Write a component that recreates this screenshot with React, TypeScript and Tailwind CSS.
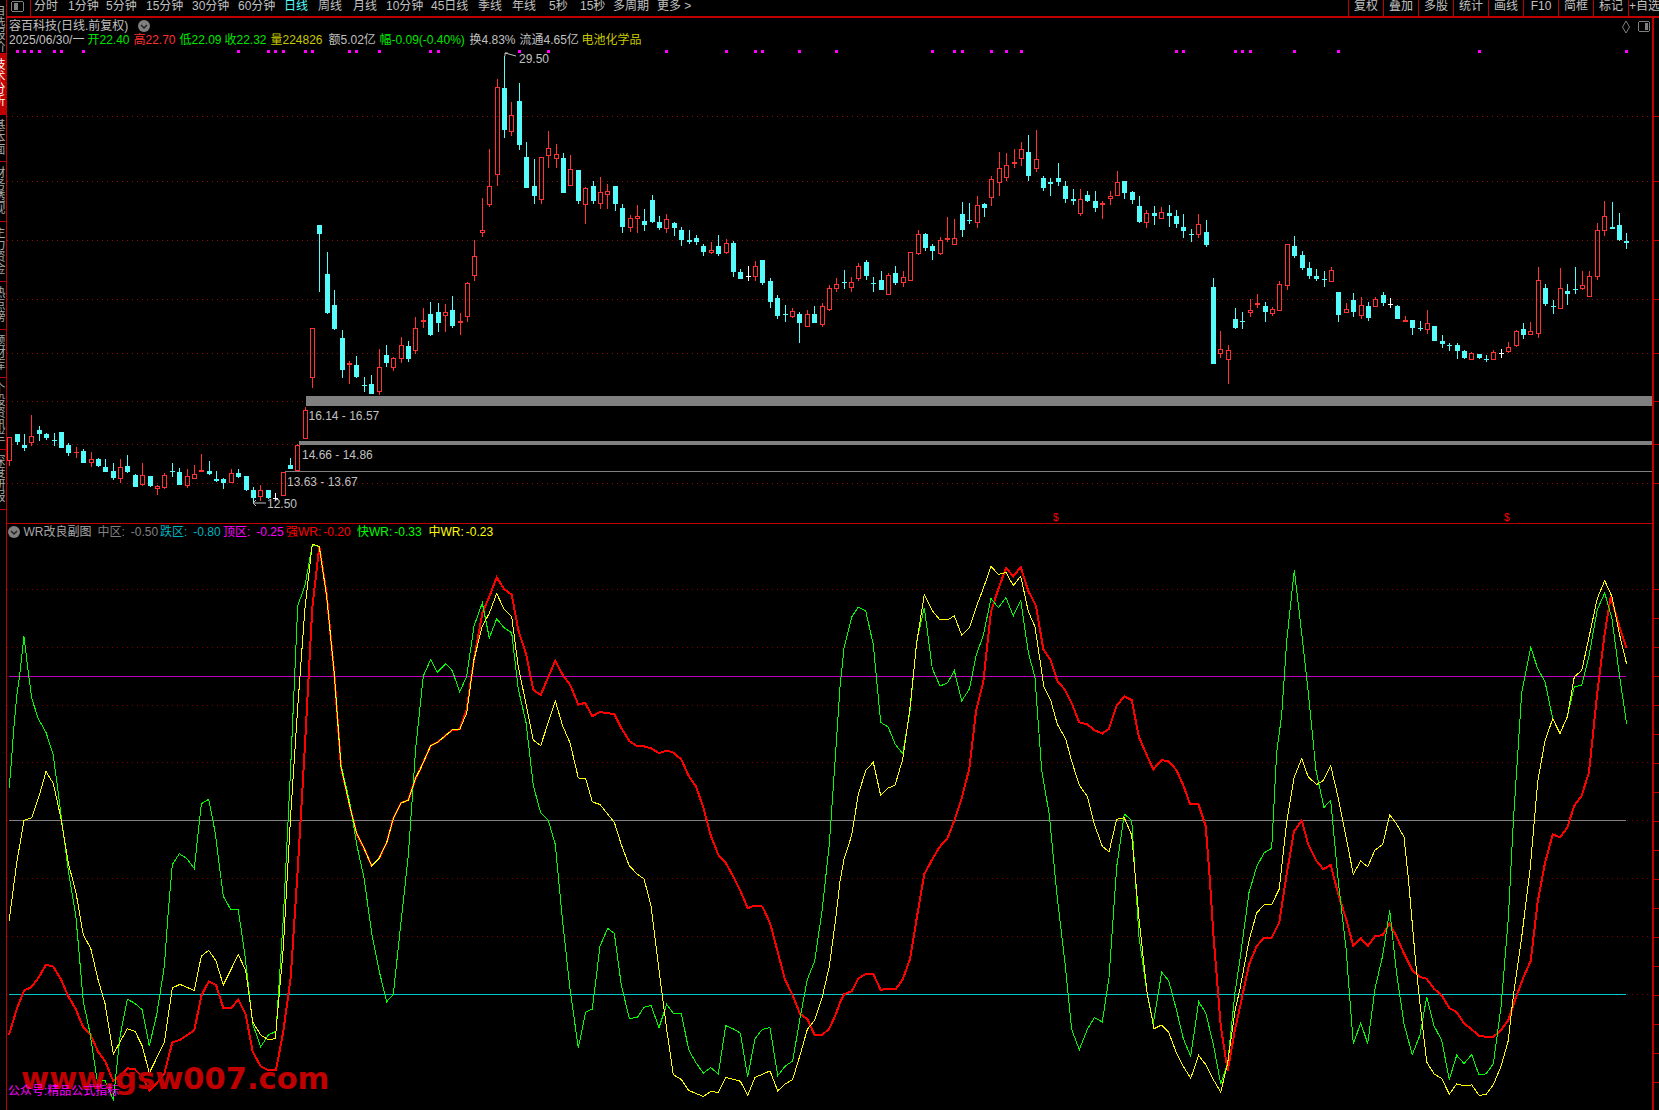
import React from "react";

type Kind = "c" | "r" | "w";
type Bar = [Kind, number, number, number, number];

// bar values are read off zoomed crops at 3x, each group has its own y offset
const BARS_A: Bar[] = [
  ["r",172,242,172,258],["c",162,186,162,194],["c",195,204,162,212],["r",169,188,105,197],["c",150,162,138,183],["c",162,175,158,180],
  ["c",180,183,160,197],["c",156,204,156,204],["c",195,219,189,228],["r",216,220,201,234],["c",213,249,207,249],["r",238,250,216,261],
  ["c",237,258,234,261],["c",261,276,237,276],["c",273,294,249,300],["r",262,297,237,309],["c",258,276,225,279],["c",285,321,282,321],
  ["r",286,316,249,318],["c",288,318,288,321],["r",319,326,315,345],["r",286,324,279,327],["c",273,276,250,291],["c",276,315,264,315],
  ["r",288,318,267,324],["r",282,296,255,297],["r",271,275,222,276],["c",273,282,243,285],["c",298,303,273,306],["c",297,309,294,327],
  ["r",280,308,267,309],["c",279,291,267,294],["c",288,329,288,332],["c",330,354,321,366],["r",330,350,315,363],["c",330,354,330,357],
  ["w",354,357,339,363],["r",276,347,276,348],["c",255,267,234,267],["r",195,273,192,273],["r",91,178,81,178],
];
const BARS_B: Bar[] = [
  ["r",865,1013,865,1044],["c",555,582,555,756],["c",702,820,636,822],["c",795,867,750,870],["c",894,990,870,1014],["r",969,975,963,1032],
  ["c",975,1011,948,1014],["c",1035,1038,1011,1056],["c",1032,1062,1005,1062],["r",982,1055,927,1065],["c",945,969,915,981],["r",955,983,951,993],
  ["r",916,956,891,969],["c",918,957,903,966],["r",865,932,831,942],["r",840,846,804,864],["c",822,885,786,888],["c",816,849,789,876],
  ["r",817,827,792,876],["c",810,858,768,864],["r",844,849,819,885],["r",730,830,726,846],["r",649,707,600,723],["r",571,578,474,591],
  ["r",439,495,327,501],["r",142,404,117,438],["c",144,270,48,294],["r",226,275,186,288],["c",183,315,129,330],["c",351,444,306,444],
  ["c",438,468,357,492],["r",352,479,352,492],["r",325,349,273,384],["r",343,356,312,384],["c",354,459,339,459],["r",388,437,345,438],
  ["c",390,483,390,492],["r",445,494,441,552],["c",438,483,423,492],["r",457,491,411,507],["r",454,464,432,507],["c",438,492,438,513],
  ["c",504,561,492,579],["r",535,563,525,576],["r",529,536,495,579],["c",543,555,507,573],["c",480,546,465,549],["c",546,564,528,570],
  ["r",538,566,522,579],["c",549,564,546,588],["c",570,600,561,618],["c",600,606,570,612],["c",594,606,585,615],
];
const BARS_C: Bar[] = [
  ["c",408,426,402,438],["r",421,430,396,432],["c",408,432,375,438],["r",400,429,387,432],["c",399,486,393,501],["c",486,507,477,507],
  ["w",498,501,468,513],["r",469,500,453,513],["c",450,519,450,525],["c",513,576,504,594],["c",564,618,555,627],["c",612,615,585,636],
  ["r",604,620,594,624],["c",612,639,606,699],["r",613,650,600,651],["c",612,639,588,639],["r",589,644,579,651],["r",535,599,525,603],
  ["r",523,536,504,546],["c",516,519,480,537],["r",517,533,501,546],["r",469,506,459,513],["c",456,498,450,510],["c",519,522,501,546],
  ["c",510,540,483,540],["r",496,554,489,555],["c",489,519,468,525],["r",502,518,483,531],["r",427,512,427,513],["r",373,431,360,435],
  ["c",372,414,369,423],["c",408,423,402,450],["r",391,431,381,435],["r",384,389,321,396],["r",385,404,327,405],["c",312,360,276,381],
  ["c",330,333,279,342],["r",286,338,258,354],["c",282,294,279,321],["r",208,263,198,288],["r",175,218,126,258],["r",166,203,129,213],
  ["r",157,163,117,174],["r",118,146,96,168],["c",126,198,75,213],["r",148,176,60,186],["c",204,234,198,243],["c",216,222,204,258],
  ["c",204,216,159,228],["c",228,267,213,279],["c",267,273,237,285],["r",268,311,237,318],["c",255,273,243,276],["c",273,294,243,306],
  ["r",279,285,273,327],["r",259,266,243,285],["r",217,257,183,258],["c",213,249,213,267],["c",246,270,243,282],["c",288,336,258,339],
  ["r",310,338,300,354],["c",309,318,288,345],["r",307,326,291,327],["c",309,318,285,351],["c",318,342,300,354],
];
const BARS_D: Bar[] = [
  ["c",141,153,102,174],["c",162,165,148,186],["r",133,164,102,174],["c",156,195,120,201],["c",321,552,294,552],["r",508,521,453,534],
  ["r",511,539,495,612],["c",417,444,384,447],["c",423,426,396,447],["r",391,398,357,411],["r",370,376,342,384],["c",378,396,366,426],
  ["r",388,401,381,408],["r",313,392,303,393],["r",193,317,193,330],["c",198,228,168,234],["c",225,264,213,270],["c",264,288,246,297],
  ["c",288,297,267,303],["c",297,300,273,321],["r",271,305,261,306],["c",336,405,336,426],["r",388,398,369,399],["c",360,396,339,411],
  ["r",376,407,351,417],["c",378,414,366,423],["r",358,380,351,381],["c",345,369,336,378],["w",372,375,354,384],["c",378,417,375,417],
  ["r",420,426,408,426],["c",420,444,420,465],["c",444,447,423,453],["r",430,449,390,462],["c",438,483,438,483],["c",483,492,465,504],
  ["c",495,498,489,513],["c",495,513,489,537],["c",513,534,510,537],["r",520,539,516,540],["c",522,534,522,537],["c",537,540,525,546],
  ["r",517,539,510,540],["w",519,522,507,534],["r",502,515,486,519],["r",454,497,450,500],["c",447,465,429,477],["r",454,464,426,465],
  ["r",301,461,261,474],["c",324,372,312,378],["c",378,381,360,402],["r",325,386,264,387],["c",333,342,312,375],["c",327,330,261,342],
  ["r",316,327,273,330],["r",289,350,273,351],["r",151,290,129,300],["r",109,152,63,168],["c",141,147,66,147],["c",135,180,99,183],["c",183,189,159,207],
];

const scale = (bars: Bar[], off: number): Bar[] =>
  bars.map(([k, t, b, wt, wb]) => [k, off + t / 3, off + b / 3, off + wt / 3, off + wb / 3]);

const BARS = [...scale(BARS_A, 380), ...scale(BARS_B, 40), ...scale(BARS_C, 110), ...scale(BARS_D, 180)];

const barX = (i: number) => Math.round(9.3 + 7.384 * i);

const DOTS = [1,2,3,4,6,7,10,31,35,36,37,40,41,46,47,50,57,58,69,73,89,97,101,102,107,112,125,128,129,133,135,137,158,159,166,167,168,174,180,199,219];
const TOP_GRID = [116, 181, 240, 299, 353, 401, 444, 483];
const WR_GRID = [589, 647, 705, 762, 820, 878, 936, 994];

// wr lines, x/y pairs from the crops (x at 3x, y at 2.703x)
const GREEN: number[][] = [
  [0,27,698,32,650,42,530,50,450,60,385,72,288,85,385,93,440,97,460,115,510,138,547,160,608,165,645,172,690,183,770,205,920,227,1040,236,1130,250,1275,270,1360,292,1490,315,1488,340,1540,360,1370,382,1268,405,1280,427,1297,448,1395,470,1310,493,1180,505,1030,517,905,538,875,560,888,583,915,604,740,626,728,645,815,670,990,693,1027,715,1027,735,1150,758,1335,782,1397,805,1365,828,1355,850,1050,872,640,893,205,915,150,937,40,958,45,980,180,1003,390,1023,635,1048,730,1070,850,1092,940,1115,1090,1137,1190,1160,1275,1180,1255,1203,1060,1225,880,1247,590],
  [420,0,480,10,395,32,350,52,385,77,362,97,380,119,438,140,395,162,260,187,197,208,292,230,240,253,265,275,278,295,430,318,520,340,690,362,765,385,785,406,850,428,1060,450,1240,475,1400,497,1303,517,1295,540,1125,563,1077,583,1090,604,1230,628,1320,652,1318,672,1290,693,1285,717,1345,740,1282,760,1306,784,1306,806,1405,828,1440,850,1468,872,1453,895,1470,917,1340,939,1348,961,1360,983,1478,1005,1375,1027,1350,1050,1345,1073,1475,1095,1450,1118,1435,1140,1320,1162,1215,1184,1165,1206,1030,1228,850,1247,600],
  [840,0,425,12,320,35,235,55,208,77,218,100,310,122,520,145,533,165,578,188,605,210,490,230,300,253,210,277,375,300,422,323,413,343,380,365,462,388,430,408,340,430,285,453,185,475,210,498,183,520,232,542,190,565,330,585,400,605,650,628,770,650,980,675,1170,695,1350,718,1405,742,1350,763,1318,787,1330,807,1210,830,910,853,768,875,785,897,1100,921,1250,940,1335,965,1195,986,1218,1010,1300,1030,1375,1052,1422,1076,1275,1097,1305,1120,1390,1142,1497,1163,1440,1185,1250],
  [1240,0,1160,27,980,50,910,72,873,95,860,110,600,125,500,140,300,163,108,185,280,205,440,228,650,252,750,272,730,295,950,318,1130,340,1390,362,1332,383,1388,405,1240,428,1150,449,1028,470,1200,492,1335,517,1418,540,1365,560,1262,582,1340,605,1380,628,1485,650,1420,672,1442,695,1418,717,1473,738,1470,760,1443,783,1290,805,1050,820,790,845,440,872,317,893,375,915,410,938,510,960,550,982,505,1003,423,1025,420,1047,340,1072,215,1094,170,1116,240,1138,390,1160,525],
];
const YELLOW: number[][] = [
  [0,27,1058,50,900,72,785,95,778,117,720,138,653,160,685,183,780,205,900,228,980,250,1095,272,1130,294,1215,315,1280,340,1417,382,1348,405,1355,427,1395,448,1468,493,1385,517,1238,540,1228,583,1245,604,1152,626,1136,648,1165,670,1230,715,1148,737,1190,758,1330,782,1365,805,1378,826,1375,850,1130,872,770,893,480,915,210,937,38,958,45,980,180,1003,390,1023,640,1048,740,1070,820,1092,860,1115,908,1137,888,1160,845,1180,780,1203,738,1225,730,1247,670],
  [420,0,648,32,583,54,573,97,540,119,539,140,495,162,350,187,260,208,225,230,172,253,215,275,235,295,370,318,470,340,568,362,583,406,462,428,530,450,575,475,670,497,672,517,735,540,742,583,790,604,850,628,908,652,930,672,943,693,1015,717,1190,740,1350,760,1472,784,1485,806,1515,850,1531,872,1518,895,1520,917,1480,961,1490,983,1528,1005,1480,1050,1462,1073,1516,1095,1498,1118,1485,1140,1420,1162,1350,1184,1325,1206,1265,1228,1180,1247,1050],
  [840,0,950,12,890,35,825,55,715,77,650,100,628,122,718,145,697,165,690,188,620,210,480,230,305,253,175,277,218,300,243,323,243,343,232,365,284,388,265,408,210,430,158,453,98,475,120,498,115,520,150,542,125,565,220,585,262,612,425,632,460,652,525,677,565,695,625,718,690,742,720,763,795,787,855,807,870,830,782,853,778,875,825,897,1050,921,1250,942,1348,965,1338,986,1358,1010,1415,1030,1450,1052,1482,1076,1420,1097,1445,1120,1485,1142,1520,1163,1440,1185,1300],
  [1240,0,1240,27,1110,50,1035,72,1013,95,1012,118,970,140,790,162,670,185,618,205,668,230,688,250,677,272,637,295,725,318,830,340,930,362,895,383,910,405,865,428,850,449,770,470,795,492,830,505,940,527,1170,540,1280,560,1438,582,1470,605,1483,628,1525,650,1497,672,1503,695,1500,717,1528,738,1526,760,1500,783,1450,805,1380,820,1260,845,1100,870,920,893,680,915,570,938,510,960,550,982,505,1003,397,1025,380,1047,290,1072,185,1094,137,1116,180,1138,280,1160,363],
];
const RED: number[][] = [
  [0,27,1365,50,1295,72,1245,95,1235,117,1208,138,1175,160,1180,183,1215,205,1260,227,1295,250,1345,272,1365,294,1410,315,1435,340,1490,360,1475,382,1455,405,1458,427,1478,448,1515,470,1495,493,1470,517,1385,540,1378,583,1352,604,1260,626,1220,648,1230,670,1292,693,1292,715,1270,737,1310,758,1410,782,1450,805,1460,828,1460,850,1355,872,1210,893,920,915,580,937,210,958,45,980,175,1003,390,1023,640,1048,740,1070,822,1092,860,1115,908,1137,888,1160,845,1180,780,1203,738,1225,730,1247,670],
  [420,0,648,32,583,54,573,97,540,119,539,140,485,162,350,187,225,208,180,230,128,253,160,275,175,295,270,318,335,340,432,362,446,406,353,428,392,450,418,475,472,495,467,517,503,540,492,583,498,604,535,628,570,652,585,672,585,693,590,717,603,740,596,760,602,784,620,806,665,828,693,850,750,872,825,895,878,917,900,939,935,961,975,983,1022,1005,1015,1027,1018,1050,1062,1073,1140,1095,1215,1118,1258,1140,1308,1162,1322,1184,1365,1206,1365,1228,1348,1247,1310],
  [840,0,1278,12,1255,35,1247,55,1212,77,1200,100,1200,122,1243,145,1240,168,1240,188,1215,210,1160,232,1040,253,930,277,890,298,858,323,832,343,785,365,725,388,645,408,490,430,410,453,220,475,160,498,103,520,125,542,100,565,165,588,205,610,322,632,352,652,408,675,432,697,472,718,520,742,525,763,541,787,550,807,537,830,475,853,450,875,460,897,560,921,610,940,647,965,622,986,625,1010,650,1030,690,1050,740,1075,740,1097,800,1110,950,1120,1090,1142,1340,1163,1462,1185,1350],
  [1240,0,1290,27,1175,50,1125,72,1102,95,1102,118,1060,140,930,162,815,185,785,205,850,230,895,250,917,272,905,295,985,318,1050,340,1125,362,1103,383,1125,405,1098,428,1095,449,1063,470,1100,492,1145,517,1190,540,1208,560,1213,582,1240,605,1258,628,1292,650,1303,672,1333,695,1350,717,1367,738,1370,760,1370,783,1352,805,1325,827,1265,850,1210,872,1165,893,1005,915,900,938,823,960,830,982,805,1003,745,1025,718,1047,655,1072,440,1094,280,1112,180,1138,260,1160,320],
];

const toPoints = (parts: number[][]) => {
  const out: string[] = [];
  parts.forEach((p) => {
    for (let i = 1; i < p.length; i += 2) {
      out.push(`${(p[0] + p[i] / 3).toFixed(1)},${(530 + p[i + 1] / 2.703).toFixed(1)}`);
    }
  });
  return out.join(" ");
};

const LEFT_TABS = [
  { label: "自选报价", cls: "h-[54px] border-[#c00000] text-[#a8a8a8]" },
  { label: "技术分析", cls: "h-[61px] border-[#c00000] bg-[#c00000] text-white" },
  { label: "基本面", cls: "h-[47px] border-[#c00000] text-[#a8a8a8]" },
  { label: "财务透视", cls: "h-[60px] border-[#c00000] text-[#a8a8a8]" },
  { label: "主力资金", cls: "h-[60px] border-[#c00000] text-[#a8a8a8]" },
  { label: "热点榜", cls: "h-[48px] border-[#c00000] text-[#a8a8a8]" },
  { label: "题材库", cls: "h-[48px] border-[#c00000] text-[#a8a8a8]" },
  { label: "个股资讯栏", cls: "h-[72px] border-[#c00000] text-[#a8a8a8]" },
  { label: "深度研报", cls: "h-[60px] border-[#c00000] text-[#a8a8a8]" },
];

const PERIODS = [
  { label: "分时", cls: "w-[34px]" },
  { label: "1分钟", cls: "w-[38px]" },
  { label: "5分钟", cls: "w-[40px]" },
  { label: "15分钟", cls: "w-[46px]" },
  { label: "30分钟", cls: "w-[46px]" },
  { label: "60分钟", cls: "w-[46px]" },
  { label: "日线", cls: "w-[34px] text-[#54fcfc]" },
  { label: "周线", cls: "w-[35px]" },
  { label: "月线", cls: "w-[33px]" },
  { label: "10分钟", cls: "w-[45px]" },
  { label: "45日线", cls: "w-[47px]" },
  { label: "季线", cls: "w-[34px]" },
  { label: "年线", cls: "w-[37px]" },
  { label: "5秒", cls: "w-[31px]" },
  { label: "15秒", cls: "w-[33px]" },
  { label: "多周期", cls: "w-[44px]" },
  { label: "更多 >", cls: "w-[40px]" },
];

const TOOLS = ["复权", "叠加", "多股", "统计", "画线", "F10", "简框", "标记"];

const RoundChevron = () => (
  <svg width="12" height="12" viewBox="0 0 12 12" className="shrink-0">
    <circle cx="6" cy="6" r="6" fill="#808080" />
    <path d="M3 5l3 3 3-3" fill="none" stroke="#222" strokeWidth="1.5" />
  </svg>
);

const PanelIcon = ({ x, y }: { x: number; y: number }) => (
  <g transform={`translate(${x} ${y})`} shapeRendering="crispEdges">
    <rect x="0.5" y="0.5" width="11" height="10" rx="2" fill="none" stroke="#808080" />
    <rect x="7" y="2" width="3" height="7" fill="#808080" />
  </g>
);

const Candles = () => (
  <g shapeRendering="crispEdges">
    {BARS.map(([k, t, b, wt, wb], i) => {
      const x = barX(i);
      const top = Math.round(t);
      const bot = Math.max(Math.round(b), top + 1);
      const color = k === "c" ? "#54fcfc" : k === "r" ? "#ff3232" : "#ffffff";
      if (k === "r" && bot - top > 2) {
        return (
          <g key={i} stroke={color} fill="none">
            <line x1={x + 0.5} x2={x + 0.5} y1={Math.round(wt)} y2={top} />
            <line x1={x + 0.5} x2={x + 0.5} y1={bot} y2={Math.round(wb)} />
            <rect x={x - 1.5} y={top + 0.5} width={4} height={bot - top - 1} />
          </g>
        );
      }
      return (
        <g key={i}>
          <line x1={x + 0.5} x2={x + 0.5} y1={Math.round(wt)} y2={Math.round(wb)} stroke={color} />
          <rect x={x - 2} y={top} width={5} height={bot - top} fill={color} />
        </g>
      );
    })}
  </g>
);

const CandlePanel = () => (
  <svg className="absolute inset-0 block" width="1645" height="505" viewBox="7 18 1645 505">
    {TOP_GRID.map((y) => (
      <line key={y} x1="7" x2="1652" y1={y + 0.5} y2={y + 0.5} stroke="#8b1010" strokeDasharray="1 4" />
    ))}
    <g fill="#808080" shapeRendering="crispEdges">
      <rect x="306" y="396" width="1346" height="10" />
      <rect x="299" y="441" width="1353" height="4" />
      <rect x="285" y="471" width="1367" height="1" />
    </g>
    <Candles />
    {DOTS.map((d) => (
      <rect key={d} x={barX(d) - 1} y="50" width="3" height="3" fill="#ff00ff" />
    ))}
    <g fill="#c0c0c0" className="text-xs [font-family:'Liberation_Sans',sans-serif]">
      <text x="519" y="63">29.50</text>
      <text x="308.5" y="420">16.14 - 16.57</text>
      <text x="302" y="459">14.66 - 14.86</text>
      <text x="287" y="486">13.63 - 13.67</text>
      <text x="267" y="508">12.50</text>
    </g>
    <path d="M505 53l11 3M505 53h3M505 53v3M253 503h13M253 503l3-3M253 503l3 3" fill="none" stroke="#c0c0c0" />
    <g fill="#ff0000" className="text-[10px] [font-family:'Liberation_Sans',sans-serif]">
      <text x="1053" y="521">$</text>
      <text x="1504" y="521">$</text>
    </g>
    <path d="M1626 21l3.5 6-3.5 6-3.5-6z" fill="none" stroke="#808080" />
    <PanelIcon x={1638} y={21} />
  </svg>
);

const WrPanel = () => (
  <svg className="absolute inset-0 block" width="1645" height="586" viewBox="7 524 1645 586">
    {WR_GRID.map((y) => (
      <line key={y} x1="7" x2="1648" y1={y + 0.5} y2={y + 0.5} stroke="#800000" strokeDasharray="1 4" />
    ))}
    <g shapeRendering="crispEdges">
      <line x1="9" x2="1626" y1="676.5" y2="676.5" stroke="#c000c0" />
      <line x1="9" x2="1626" y1="820.5" y2="820.5" stroke="#808080" />
      <line x1="9" x2="1626" y1="994.5" y2="994.5" stroke="#00c8c8" />
      <polyline points={toPoints(RED)} fill="none" stroke="#ff0000" strokeWidth="2" />
      <polyline points={toPoints(GREEN)} fill="none" stroke="#00ff00" />
      <polyline points={toPoints(YELLOW)} fill="none" stroke="#ffff00" />
    </g>
  </svg>
);

const RightTicks = () => {
  const wr = Array.from({ length: 18 }, (_, i) => 589 + i * 29);
  return (
    <svg className="block" width="5" height="1092" viewBox="0 18 5 1092">
      {[...TOP_GRID, ...wr].map((y) => (
        <line key={y} x1="0" x2="5" y1={y + 0.5} y2={y + 0.5} stroke="#c00000" />
      ))}
    </svg>
  );
};

const App = () => {
  return (
    <div className="flex h-[1110px] w-[1659px] overflow-hidden bg-black text-xs text-[#c0c0c0] [font-family:'Liberation_Sans','Noto_Sans_CJK_SC',sans-serif]">
      {/* left tabs, only a sliver of the text is on screen */}
      <aside className="flex h-full w-[7px] shrink-0 flex-col border-r border-[#c00000]">
        {LEFT_TABS.map((t) => (
          <div key={t.label} className={`w-full shrink-0 overflow-hidden border-b ${t.cls}`}>
            <div className="-ml-[8px] w-3 pt-1 leading-[12px] [writing-mode:vertical-rl]">{t.label}</div>
          </div>
        ))}
      </aside>

      <div className="flex min-w-0 flex-1 flex-col">
        <header className="flex h-[18px] shrink-0 items-start overflow-hidden border-b-2 border-[#c00000] leading-[13px] whitespace-nowrap">
          <div className="flex h-4 w-[24px] shrink-0 items-start border-r border-[#c00000] pl-[4px] pt-[1px]">
            <svg width="13" height="11" viewBox="0 0 13 11" shapeRendering="crispEdges">
              <rect x="0.5" y="0.5" width="12" height="10" rx="2" fill="none" stroke="#808080" />
              <rect x="3" y="2" width="4" height="7" fill="#808080" />
            </svg>
          </div>
          <div className="flex pl-[3px]">
            {PERIODS.map((p) => (
              <span key={p.label} className={p.cls}>{p.label}</span>
            ))}
          </div>
          <div className="ml-auto flex">
            {TOOLS.map((t) => (
              <span key={t} className="h-4 w-[35px] border-l border-[#c00000] text-center">{t}</span>
            ))}
            <span className="h-4 w-[31px] border-l border-[#c00000] text-center">+自选</span>
          </div>
        </header>

        <div className="flex min-h-0 flex-1">
          <main className="flex w-[1647px] shrink-0 flex-col border-r-2 border-[#c00000]">
            <section className="relative h-[506px] shrink-0 border-b border-[#c00000]">
              <CandlePanel />
              <div className="absolute left-0 top-0 pl-[2px] pt-[1px] leading-[14px] whitespace-nowrap">
                <div className="flex h-[14px] items-center gap-[10px]">
                  <span>容百科技(日线.前复权)</span>
                  <RoundChevron />
                </div>
                <div className="flex h-[14px] items-center">
                  <span className="w-[78.5px]">2025/06/30/一</span>
                  <span className="w-[46px] text-[#00e600]">开22.40</span>
                  <span className="w-[46px] text-[#ff3232]">高22.70</span>
                  <span className="w-[45px] text-[#00e600]">低22.09</span>
                  <span className="w-[46px] text-[#00e600]">收22.32</span>
                  <span className="w-[58px] text-[#c8c800]">量224826</span>
                  <span className="w-[51px]">额5.02亿</span>
                  <span className="w-[90px] text-[#00e600]">幅-0.09(-0.40%)</span>
                  <span className="w-[50px]">换4.83%</span>
                  <span className="w-[62px]">流通4.65亿</span>
                  <span className="text-[#c8c800]">电池化学品</span>
                </div>
              </div>
            </section>

            <section className="relative min-h-0 flex-1 overflow-hidden">
              <WrPanel />
              <div className="absolute left-0 top-0 flex h-4 items-center pl-[1px] whitespace-nowrap">
                <RoundChevron />
                <span className="ml-[3.5px] w-[74px] text-[#a8a8a8]">WR改良副图</span>
                <span className="w-[62.5px] text-[#808080]">中区:<span className="ml-[6px]">-0.50</span></span>
                <span className="w-[63px] text-[#00b4c0]">跌区:<span className="ml-[6px]">-0.80</span></span>
                <span className="w-[63px] text-[#ff00ff]">顶区:<span className="ml-[6px]">-0.25</span></span>
                <span className="w-[71px] text-[#ff0000]">强WR:<span className="ml-[2px]">-0.20</span></span>
                <span className="w-[71.5px] text-[#00ff00]">快WR:<span className="ml-[2px]">-0.33</span></span>
                <span className="text-[#ffff00]">中WR:<span className="ml-[2px]">-0.23</span></span>
              </div>
              <div className="absolute left-[14px] top-[537px] text-[30.5px] leading-[36px] font-bold text-[#c00000] [font-family:'DejaVu_Sans',sans-serif]">
                www.gsw007.com
              </div>
              <div className="absolute left-[1px] top-[560px] leading-[14px] text-[#ff00ff]">公众号:精品公式指标</div>
            </section>
          </main>
          <div className="w-[5px] shrink-0">
            <RightTicks />
          </div>
        </div>
      </div>
    </div>
  );
};

export default App;
